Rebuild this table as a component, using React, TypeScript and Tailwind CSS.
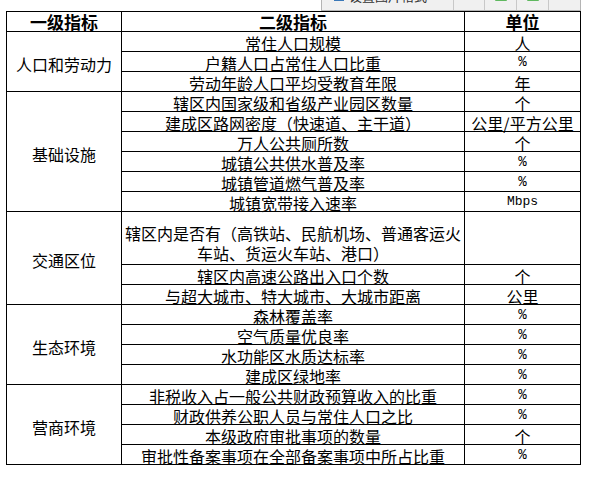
import React from "react";

type Row = { name: React.ReactNode; unit: string; tall?: boolean };
type Group = { label: string; span: string; rows: Row[] };

const groups: Group[] = [
  {
    label: "人口和劳动力",
    span: "row-span-3",
    rows: [
      { name: "常住人口规模", unit: "人" },
      { name: "户籍人口占常住人口比重", unit: "%" },
      { name: "劳动年龄人口平均受教育年限", unit: "年" },
    ],
  },
  {
    label: "基础设施",
    span: "row-span-6",
    rows: [
      { name: "辖区内国家级和省级产业园区数量", unit: "个" },
      { name: "建成区路网密度（快速道、主干道）", unit: "公里/平方公里" },
      { name: "万人公共厕所数", unit: "个" },
      { name: "城镇公共供水普及率", unit: "%" },
      { name: "城镇管道燃气普及率", unit: "%" },
      { name: "城镇宽带接入速率", unit: "Mbps" },
    ],
  },
  {
    label: "交通区位",
    span: "row-span-3",
    rows: [
      {
        name: (
          <>
            辖区内是否有（高铁站、民航机场、普通客运火
            <br />
            车站、货运火车站、港口）
          </>
        ),
        unit: "",
        tall: true,
      },
      { name: "辖区内高速公路出入口个数", unit: "个" },
      { name: "与超大城市、特大城市、大城市距离", unit: "公里" },
    ],
  },
  {
    label: "生态环境",
    span: "row-span-4",
    rows: [
      { name: "森林覆盖率", unit: "%" },
      { name: "空气质量优良率", unit: "%" },
      { name: "水功能区水质达标率", unit: "%" },
      { name: "建成区绿地率", unit: "%" },
    ],
  },
  {
    label: "营商环境",
    span: "row-span-4",
    rows: [
      { name: "非税收入占一般公共财政预算收入的比重", unit: "%" },
      { name: "财政供养公职人员与常住人口之比", unit: "%" },
      { name: "本级政府审批事项的数量", unit: "个" },
      { name: "审批性备案事项在全部备案事项中所占比重", unit: "%" },
    ],
  },
];

const cjk = "font-['Noto_Sans_CJK_SC','Noto_Sans',sans-serif]";

function Unit({ u }: { u: string }) {
  if (u === "%") {
    return (
      <span className="font-['Liberation_Mono',monospace] text-[14px] leading-[16px] pb-[1px]">
        {u}
      </span>
    );
  }
  if (u === "Mbps") {
    return (
      <span className="font-['Liberation_Mono',monospace] text-[13px] leading-[16px] pb-[1px]">
        {u}
      </span>
    );
  }
  return <span className="text-[16px] leading-[16px]">{u}</span>;
}

function GreenIcon({ kind }: { kind: number }) {
  return (
    <svg width="14" height="12" viewBox="0 0 14 12">
      {kind === 0 && (
        <path d="M2 2 L6 6 L2 10 M12 2 L8 6 L12 10" stroke="#2fa52f" strokeWidth="2" fill="none" />
      )}
      {kind === 1 && (
        <g stroke="#2fa52f" strokeWidth="1.5" fill="none">
          <rect x="2" y="3" width="10" height="8" />
          <path d="M5 3 V11 M9 3 V11" />
        </g>
      )}
      {kind === 2 && (
        <rect x="2" y="2" width="10" height="9" stroke="#2fa52f" strokeWidth="1.5" fill="none" />
      )}
      {kind === 3 && (
        <g fill="#2fa52f">
          <circle cx="7" cy="6" r="4" />
          <circle cx="7" cy="6" r="1.5" fill="#f0f0f0" />
        </g>
      )}
    </svg>
  );
}

export default function App() {
  return (
    <div className={`relative w-[601px] h-[483px] bg-white text-black ${cjk}`}>
      {/* floating toolbar, cut off at the top */}
      <div className="absolute left-[321px] top-[-16px] w-[260px] h-[27px] bg-[#f0f0f0] border border-[#b4b4b4] flex items-center">
        <div className="flex items-center w-[131px] pl-[12px] gap-[5px] h-full pb-[4px]">
          <div className="w-[10px] h-[11px] bg-[#5b9bd5] border border-[#3a78b8]" />
          <span className="text-[13px] leading-[13px] text-[#333] whitespace-nowrap">设置图片格式</span>
        </div>
        {[0, 1, 2, 3].map((k) => (
          <div
            key={k}
            className="w-[32px] h-full border-l border-[#c8c8c8] flex items-center justify-center pb-[5px]"
          >
            <GreenIcon kind={k} />
          </div>
        ))}
      </div>

      <div className="pt-[11px] pl-[6px]">
        <div className="grid grid-cols-[115px_343px_116px] grid-rows-[repeat(10,20px)_53px_repeat(10,20px)] border-l border-t border-black w-[575px]">
          {/* header */}
          <div className="col-start-1 border-r border-b border-black flex items-center justify-center font-bold text-[17px] leading-[17px]">
            一级指标
          </div>
          <div className="col-start-2 border-r border-b border-black flex items-center justify-center font-bold text-[17px] leading-[17px]">
            二级指标
          </div>
          <div className="col-start-3 border-r border-b border-black flex items-center justify-center font-bold text-[17px] leading-[17px]">
            单位
          </div>

          {groups.map((g) => (
            <React.Fragment key={g.label}>
              <div
                className={`col-start-1 ${g.span} border-r border-b border-black flex items-center justify-center pt-[4px] text-[16px] leading-[16px]`}
              >
                {g.label}
              </div>
              {g.rows.map((r, i) => (
                <React.Fragment key={i}>
                  <div
                    className={`col-start-2 border-r border-b border-black flex items-end justify-center text-center text-[16px] whitespace-nowrap ${
                      r.tall ? "leading-[20px] pb-[1px]" : "leading-[16px]"
                    }`}
                  >
                    <span>{r.name}</span>
                  </div>
                  <div className="col-start-3 border-r border-b border-black flex items-end justify-center">
                    {r.unit && <Unit u={r.unit} />}
                  </div>
                </React.Fragment>
              ))}
            </React.Fragment>
          ))}
        </div>
      </div>
    </div>
  );
}
